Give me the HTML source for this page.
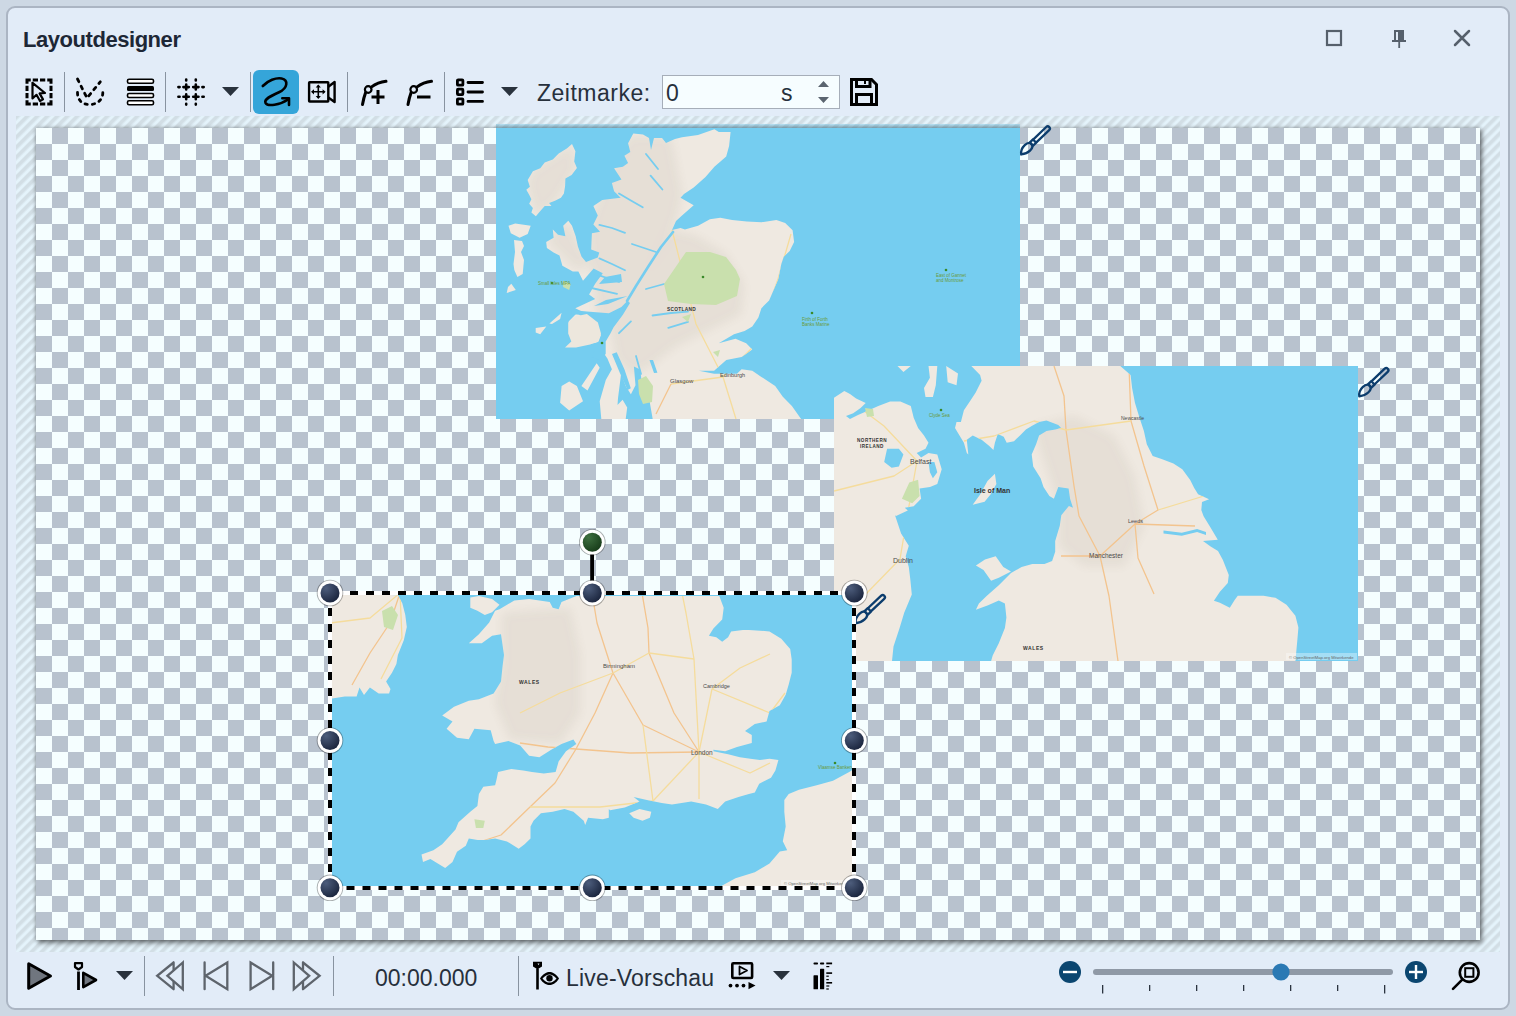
<!DOCTYPE html>
<html><head><meta charset="utf-8">
<style>
html,body{margin:0;padding:0;}
body{width:1516px;height:1016px;background:#cdd8e4;position:relative;overflow:hidden;font-family:"Liberation Sans",sans-serif;}
.abs{position:absolute;}
#win{position:absolute;left:6px;top:6px;width:1500px;height:1000px;border:2px solid #abb5c3;border-radius:9px;background:#e2ecf8;}
.title{position:absolute;left:23px;top:29px;font-size:22px;line-height:1;font-weight:bold;color:#1d2736;letter-spacing:-0.45px;white-space:nowrap;}
.sep{position:absolute;width:1px;background:#8893a0;}
.txt{position:absolute;font-size:23px;color:#27303c;white-space:nowrap;line-height:1;}
#hatch{position:absolute;left:16px;top:116px;width:1484px;height:836px;
 background:repeating-linear-gradient(135deg,#d2dee5 0px,#d2dee5 2px,#e4f3fb 4.2px,#e4f3fb 5.6px,#d2dee5 7.07px);}
#checker{position:absolute;left:36px;top:128px;width:1444px;height:812px;
 background:conic-gradient(#b8c2ce 0 25%,#f5feff 0 50%,#b8c2ce 0 75%,#f5feff 0) 0 0/32px 32px;
 box-shadow:0 0 4px rgba(0,0,0,0.35),2px 3px 5px rgba(0,0,0,0.45);}
body>svg{position:absolute;overflow:visible;}
</style></head><body>
<div id="win"></div>
<div class="title">Layoutdesigner</div>
<div id="hatch"></div>
<div id="checker"></div>
<svg width="1516" height="1016" style="left:0;top:0" viewBox="0 0 1516 1016">
<g transform="translate(496,124)"><svg x="0" y="0" width="524" height="295" style="position:static" viewBox="0 0 524 295"><rect width="524" height="295" fill="#75cdf0"/>
<clipPath id="cl1"><path d="M137.3,9.6 L147.0,10.5 L153.0,14.0 L155.0,26.0 L158.0,14.0 L166.0,14.0 L170.0,19.0 L179.0,15.0 L186.0,13.3 L202.0,11.1 L218.4,5.2 L222.8,8.1 L234.6,8.1 L233.1,22.1 L230.2,32.5 L218.4,42.8 L209.5,53.1 L197.7,63.5 L188.0,70.0 L184.5,73.8 L197.7,81.2 L186.0,91.5 L180.0,97.0 L176.0,106.0 L184.5,104.0 L188.9,105.5 L202.1,101.8 L213.9,95.2 L224.3,93.7 L236.1,95.9 L250.8,97.4 L265.6,98.2 L280.4,95.9 L289.2,98.9 L296.6,106.3 L298.1,118.1 L293.7,126.9 L287.7,132.8 L285.3,140.0 L282.2,155.3 L277.6,165.9 L273.1,176.6 L265.4,184.2 L262.4,193.4 L256.3,202.5 L248.6,207.1 L238.0,210.2 L222.7,219.3 L239.5,214.8 L250.2,219.3 L256.3,225.4 L245.6,233.1 L230.3,236.1 L218.1,246.8 L202.9,246.8 L218.1,249.8 L241.0,249.8 L245.6,245.3 L256.3,246.8 L265.4,252.9 L279.2,262.0 L286.8,272.7 L295.9,281.9 L305.1,295.0 L340.0,295.0 L144.9,295.0 L146.5,277.3 L141.9,259.0 L137.3,274.3 L129.7,262.0 L125.1,249.8 L122.0,274.3 L120.5,295.0 L105.3,295.0 L103.7,277.3 L109.8,255.9 L115.9,245.3 L111.4,234.6 L105.3,225.4 L106.8,216.3 L111.4,207.1 L106.8,198.0 L94.6,194.9 L88.5,188.8 L79.3,184.2 L99.2,175.1 L93.1,170.5 L99.2,159.8 L106.8,149.2 L97.6,144.6 L87.0,156.8 L82.4,147.6 L76.8,147.6 L66.4,141.7 L63.5,131.4 L57.6,128.4 L50.9,124.0 L50.2,118.1 L57.6,113.7 L56.8,105.5 L62.0,110.7 L69.4,112.2 L67.2,101.8 L72.3,96.7 L76.0,101.8 L79.7,112.2 L81.9,122.5 L85.6,132.8 L90.0,138.0 L101.8,133.6 L103.3,128.4 L95.2,125.5 L95.9,109.2 L104.1,107.7 L97.4,100.4 L101.8,91.5 L97.4,81.9 L106.3,76.0 L112.2,75.3 L124.7,73.8 L118.1,67.2 L115.9,59.0 L125.5,55.4 L118.1,44.3 L126.9,42.8 L132.1,39.1 L128.4,31.7 L134.3,28.0 L132.1,19.2 Z M76.0,19.9 L79.4,27.3 L78.2,37.6 L80.9,44.0 L75.6,50.9 L69.4,54.6 L69.1,62.0 L67.9,69.4 L64.9,73.8 L59.0,76.8 L53.1,79.0 L55.4,81.9 L48.7,81.9 L44.3,87.1 L39.9,92.3 L35.4,88.6 L36.9,84.1 L33.2,79.7 L35.4,75.3 L33.2,70.8 L30.3,65.7 L33.9,62.7 L31.7,56.1 L36.9,47.2 L44.3,44.3 L48.7,38.4 L56.8,35.4 L62.7,29.5 L70.8,24.4 Z M12.5,101.8 L19.2,99.6 L34.7,101.8 L31.7,110.0 L23.6,113.7 L14.8,109.2 Z M18.0,116.0 L26.0,117.0 L28.0,122.0 L25.0,128.0 L28.0,136.0 L26.7,149.9 L21.4,153.0 L18.3,146.1 L17.5,140.0 L19.0,128.0 Z M15.3,159.8 L19.8,165.9 L10.7,169.0 L12.0,163.0 Z M53.4,199.5 L65.6,188.8 L64.1,194.9 L56.0,200.0 Z M39.7,204.0 L50.3,202.5 L44.2,210.2 L39.7,208.6 Z M72.6,197.4 L80.0,190.0 L87.1,185.8 L101.6,191.6 L108.0,197.0 L116.1,203.3 L110.3,214.9 L99.0,219.0 L87.1,220.7 L78.4,209.1 Z M65.6,262.0 L73.2,257.5 L80.9,262.0 L87.0,277.3 L73.2,286.5 L64.1,278.8 Z M85.4,262.0 L100.7,239.2 L103.7,243.7 L91.5,266.6 Z M120.5,281.9 L126.6,275.8 L131.2,283.4 L129.7,295.0 L120.5,295.0 Z"/></clipPath>
<path fill="#efe9e1" d="M137.3,9.6 L147.0,10.5 L153.0,14.0 L155.0,26.0 L158.0,14.0 L166.0,14.0 L170.0,19.0 L179.0,15.0 L186.0,13.3 L202.0,11.1 L218.4,5.2 L222.8,8.1 L234.6,8.1 L233.1,22.1 L230.2,32.5 L218.4,42.8 L209.5,53.1 L197.7,63.5 L188.0,70.0 L184.5,73.8 L197.7,81.2 L186.0,91.5 L180.0,97.0 L176.0,106.0 L184.5,104.0 L188.9,105.5 L202.1,101.8 L213.9,95.2 L224.3,93.7 L236.1,95.9 L250.8,97.4 L265.6,98.2 L280.4,95.9 L289.2,98.9 L296.6,106.3 L298.1,118.1 L293.7,126.9 L287.7,132.8 L285.3,140.0 L282.2,155.3 L277.6,165.9 L273.1,176.6 L265.4,184.2 L262.4,193.4 L256.3,202.5 L248.6,207.1 L238.0,210.2 L222.7,219.3 L239.5,214.8 L250.2,219.3 L256.3,225.4 L245.6,233.1 L230.3,236.1 L218.1,246.8 L202.9,246.8 L218.1,249.8 L241.0,249.8 L245.6,245.3 L256.3,246.8 L265.4,252.9 L279.2,262.0 L286.8,272.7 L295.9,281.9 L305.1,295.0 L340.0,295.0 L144.9,295.0 L146.5,277.3 L141.9,259.0 L137.3,274.3 L129.7,262.0 L125.1,249.8 L122.0,274.3 L120.5,295.0 L105.3,295.0 L103.7,277.3 L109.8,255.9 L115.9,245.3 L111.4,234.6 L105.3,225.4 L106.8,216.3 L111.4,207.1 L106.8,198.0 L94.6,194.9 L88.5,188.8 L79.3,184.2 L99.2,175.1 L93.1,170.5 L99.2,159.8 L106.8,149.2 L97.6,144.6 L87.0,156.8 L82.4,147.6 L76.8,147.6 L66.4,141.7 L63.5,131.4 L57.6,128.4 L50.9,124.0 L50.2,118.1 L57.6,113.7 L56.8,105.5 L62.0,110.7 L69.4,112.2 L67.2,101.8 L72.3,96.7 L76.0,101.8 L79.7,112.2 L81.9,122.5 L85.6,132.8 L90.0,138.0 L101.8,133.6 L103.3,128.4 L95.2,125.5 L95.9,109.2 L104.1,107.7 L97.4,100.4 L101.8,91.5 L97.4,81.9 L106.3,76.0 L112.2,75.3 L124.7,73.8 L118.1,67.2 L115.9,59.0 L125.5,55.4 L118.1,44.3 L126.9,42.8 L132.1,39.1 L128.4,31.7 L134.3,28.0 L132.1,19.2 Z M76.0,19.9 L79.4,27.3 L78.2,37.6 L80.9,44.0 L75.6,50.9 L69.4,54.6 L69.1,62.0 L67.9,69.4 L64.9,73.8 L59.0,76.8 L53.1,79.0 L55.4,81.9 L48.7,81.9 L44.3,87.1 L39.9,92.3 L35.4,88.6 L36.9,84.1 L33.2,79.7 L35.4,75.3 L33.2,70.8 L30.3,65.7 L33.9,62.7 L31.7,56.1 L36.9,47.2 L44.3,44.3 L48.7,38.4 L56.8,35.4 L62.7,29.5 L70.8,24.4 Z M12.5,101.8 L19.2,99.6 L34.7,101.8 L31.7,110.0 L23.6,113.7 L14.8,109.2 Z M18.0,116.0 L26.0,117.0 L28.0,122.0 L25.0,128.0 L28.0,136.0 L26.7,149.9 L21.4,153.0 L18.3,146.1 L17.5,140.0 L19.0,128.0 Z M15.3,159.8 L19.8,165.9 L10.7,169.0 L12.0,163.0 Z M53.4,199.5 L65.6,188.8 L64.1,194.9 L56.0,200.0 Z M39.7,204.0 L50.3,202.5 L44.2,210.2 L39.7,208.6 Z M72.6,197.4 L80.0,190.0 L87.1,185.8 L101.6,191.6 L108.0,197.0 L116.1,203.3 L110.3,214.9 L99.0,219.0 L87.1,220.7 L78.4,209.1 Z M65.6,262.0 L73.2,257.5 L80.9,262.0 L87.0,277.3 L73.2,286.5 L64.1,278.8 Z M85.4,262.0 L100.7,239.2 L103.7,243.7 L91.5,266.6 Z M120.5,281.9 L126.6,275.8 L131.2,283.4 L129.7,295.0 L120.5,295.0 Z"/>
<filter id="bl1" x="-20%" y="-20%" width="140%" height="140%"><feGaussianBlur stdDeviation="5"/></filter>
<g clip-path="url(#cl1)"><path fill="#6e5f48" opacity="0.07" filter="url(#bl1)" d="M133.0,12.0 L160.0,12.0 L175.0,14.0 L186.0,70.0 L180.0,97.0 L150.0,150.0 L113.0,195.0 L104.0,210.0 L96.0,150.0 L92.0,110.0 L98.0,87.0 L115.0,45.0 Z M113.0,195.0 L150.0,150.0 L176.0,106.0 L200.0,112.0 L230.0,130.0 L248.0,160.0 L245.0,190.0 L215.0,205.0 L180.0,222.0 L150.0,245.0 L135.0,250.0 L120.0,235.0 Z M50.0,116.0 L72.0,97.0 L85.0,125.0 L100.0,139.0 L80.0,146.0 Z M36.0,47.0 L76.0,20.0 L80.0,44.0 L60.0,77.0 L40.0,92.0 L31.0,60.0 Z"/></g>
<g clip-path="url(#cl1)" fill="none" stroke-width="1.3" stroke-linejoin="round"><path stroke="#f5dc9c" d="M175,260 L227,253 L260,220 L282,155 L295,110"/><path stroke="#f3c48e" d="M175,260 L160,290"/><path stroke="#f5dc9c" d="M227,253 L240,295"/><path stroke="#f5dc9c" d="M227,253 L200,200 L176,106"/></g>
<path fill="#75cdf0" d="M75.3,186.1 L90.9,187.6 L112.9,189.2 L125.4,183.0 L131.6,176.7 L134.0,179.0 L126.9,190.8 L117.6,203.3 L114.4,209.6 L109.7,217.4 L109.7,229.9 L103.5,236.2 L95.6,233.0 L100.3,223.6 L105.0,211.1 L101.9,206.4 L90.9,195.5 L83.1,190.8 L75.3,190.0 Z M116.0,229.9 L120.7,228.3 L128.5,245.5 L134.8,264.3 L131.6,265.9 L123.8,248.7 Z M137.9,242.4 L144.2,245.5 L145.7,258.1 L153.5,276.8 L156.7,295.0 L134.8,295.0 L131.6,276.8 L139.5,261.2 Z M153.5,236.0 L157.0,236.0 L161.4,248.7 L158.0,249.0 Z M125.0,150.0 L109.0,153.0 L103.0,160.0 L126.0,158.0 Z M131.6,172.0 L110.0,176.0 L98.0,182.0 L112.0,180.0 Z"/>
<path fill="#ede7dd" d="M72.2,198.6 L80.0,192.3 L90.9,190.0 L101.9,198.6 L105.0,209.6 L101.9,217.4 L94.1,220.5 L80.0,223.6 L69.0,223.6 L75.3,217.4 L72.2,209.6 Z"/>
<path fill="none" stroke="#75cdf0" stroke-width="2.6" stroke-linecap="round" stroke-linejoin="round" d="M177,108 L165,123 L152,143 L140,162 L131,177"/>
<path fill="none" stroke="#75cdf0" stroke-width="1.8" stroke-linecap="round" stroke-linejoin="round" d="M123,69.5 L134,76 L146.7,83.2 M154.6,51.7 L166.4,65.5 M103.4,100.9 L116,104 L129,108.8 M103.4,134.4 L116,140 L129,146.2 M99.4,150.2 L123,158 M95.5,164 L121,169.9 M156.5,191.5 L175,189 L192,187.6 M172.3,203.8 L192,197.9 M123,209.2 L134.9,197.4 M140,232 L145,250 M150,30 L162,45 M136,120 L160,128 M150,165 L168,160"/>
<path fill="#c9e0ad" d="M168.0,160.0 L190.0,128.0 L214.0,128.0 L230.0,133.0 L240.0,146.0 L244.0,155.0 L241.0,172.0 L220.0,181.0 L195.0,180.0 L172.0,177.0 Z M142.0,256.0 L150.0,252.0 L157.0,262.0 L156.0,278.0 L147.0,280.0 L143.0,270.0 Z M186.0,193.0 L195.0,190.0 L192.0,198.0 Z M217.0,228.0 L224.0,226.0 L222.0,233.0 Z M67.1,156.8 L74.8,159.8 L73.2,165.9 L67.1,162.9 Z"/>
</svg></g>
<g transform="translate(834,366)"><svg x="0" y="0" width="524" height="295" style="position:static" viewBox="0 0 524 295"><rect width="524" height="295" fill="#75cdf0"/>
<clipPath id="cl2"><path d="M0.0,31.7 L10.3,25.1 L16.0,28.0 L22.1,32.5 L31.7,36.9 L26.6,42.0 L19.2,47.2 L12.0,50.0 L16.0,53.0 L24.0,49.0 L32.0,45.5 L44.3,39.9 L56.1,35.4 L66.4,35.4 L76.8,39.9 L79.7,51.7 L84.1,62.0 L90.0,69.4 L94.5,76.8 L91.5,82.7 L82.7,87.1 L87.1,91.5 L94.5,87.1 L103.3,88.6 L107.7,103.3 L103.3,118.1 L96.0,121.0 L85.6,122.5 L87.1,132.8 L79.7,140.2 L70.8,141.7 L73.8,144.6 L62.0,150.0 L61.0,149.2 L67.1,167.5 L74.8,179.7 L71.7,190.3 L74.8,201.0 L76.3,213.2 L77.8,228.5 L70.2,246.8 L65.6,262.0 L59.5,280.4 L58.0,295.0 L0.0,295.0 Z M63.5,0.0 L76.8,0.0 L69.4,5.9 Z M94.5,0.0 L103.3,0.0 L101.8,19.2 L98.9,31.0 L91.5,31.0 L90.0,22.1 L95.9,11.8 Z M112.2,0.0 L124.0,7.4 L122.5,19.2 L113.7,16.2 Z M138.7,138.7 L146.1,128.4 L153.5,115.1 L160.9,107.7 L162.4,118.1 L156.5,128.4 L150.6,135.8 L141.7,138.0 Z M137.3,0.0 L146.1,8.9 L147.6,14.8 L141.7,26.6 L135.8,35.4 L129.9,44.3 L126.9,56.1 L122.5,56.1 L121.0,62.0 L125.5,69.4 L129.9,76.8 L132.8,87.1 L134.3,88.6 L132.8,73.8 L138.7,69.4 L147.6,73.8 L155.0,79.7 L159.4,84.1 L160.9,76.8 L163.8,67.9 L169.7,70.8 L172.7,76.8 L180.0,75.3 L186.0,69.4 L191.9,63.5 L197.7,60.0 L205.0,56.0 L212.5,54.6 L224.3,59.0 L227.2,62.0 L221.3,63.5 L212.5,64.9 L205.1,69.4 L202.1,78.2 L197.7,88.6 L199.2,100.4 L206.6,112.2 L209.5,121.0 L215.4,129.9 L219.9,132.8 L224.3,121.0 L234.6,122.5 L236.1,132.8 L239.0,141.7 L234.9,140.0 L227.3,149.2 L225.8,159.8 L221.2,175.1 L221.2,185.8 L218.1,194.9 L210.5,198.0 L198.3,198.0 L187.6,201.0 L177.0,207.1 L164.8,219.3 L152.6,230.0 L144.9,237.6 L141.9,243.7 L154.1,239.2 L164.8,234.6 L170.9,237.6 L172.4,251.4 L170.9,262.0 L164.8,277.3 L158.7,289.5 L157.1,295.0 L461.4,295.0 L463.4,273.5 L464.4,261.6 L461.4,249.7 L452.5,238.7 L441.5,231.8 L429.6,229.8 L415.7,229.8 L403.8,229.8 L400.8,233.8 L395.8,241.7 L385.9,236.7 L379.9,234.8 L385.9,225.8 L393.8,216.9 L394.8,208.9 L388.9,194.0 L384.0,185.0 L376.6,180.6 L369.0,174.9 L383.8,173.8 L375.9,160.5 L369.6,150.2 L367.3,143.9 L368.0,136.0 L375.1,133.3 L364.1,128.2 L360.2,121.9 L356.2,114.0 L348.3,103.3 L339.4,97.4 L327.6,93.0 L318.7,90.0 L312.8,78.2 L309.9,64.9 L305.5,51.7 L301.0,36.9 L298.1,22.1 L296.6,8.9 L286.3,0.0 Z M141.9,199.5 L151.0,193.4 L161.7,190.3 L169.3,201.0 L177.0,205.6 L164.8,211.7 L157.1,214.8 L149.5,204.1 Z"/></clipPath>
<path fill="#efe9e1" d="M0.0,31.7 L10.3,25.1 L16.0,28.0 L22.1,32.5 L31.7,36.9 L26.6,42.0 L19.2,47.2 L12.0,50.0 L16.0,53.0 L24.0,49.0 L32.0,45.5 L44.3,39.9 L56.1,35.4 L66.4,35.4 L76.8,39.9 L79.7,51.7 L84.1,62.0 L90.0,69.4 L94.5,76.8 L91.5,82.7 L82.7,87.1 L87.1,91.5 L94.5,87.1 L103.3,88.6 L107.7,103.3 L103.3,118.1 L96.0,121.0 L85.6,122.5 L87.1,132.8 L79.7,140.2 L70.8,141.7 L73.8,144.6 L62.0,150.0 L61.0,149.2 L67.1,167.5 L74.8,179.7 L71.7,190.3 L74.8,201.0 L76.3,213.2 L77.8,228.5 L70.2,246.8 L65.6,262.0 L59.5,280.4 L58.0,295.0 L0.0,295.0 Z M63.5,0.0 L76.8,0.0 L69.4,5.9 Z M94.5,0.0 L103.3,0.0 L101.8,19.2 L98.9,31.0 L91.5,31.0 L90.0,22.1 L95.9,11.8 Z M112.2,0.0 L124.0,7.4 L122.5,19.2 L113.7,16.2 Z M138.7,138.7 L146.1,128.4 L153.5,115.1 L160.9,107.7 L162.4,118.1 L156.5,128.4 L150.6,135.8 L141.7,138.0 Z M137.3,0.0 L146.1,8.9 L147.6,14.8 L141.7,26.6 L135.8,35.4 L129.9,44.3 L126.9,56.1 L122.5,56.1 L121.0,62.0 L125.5,69.4 L129.9,76.8 L132.8,87.1 L134.3,88.6 L132.8,73.8 L138.7,69.4 L147.6,73.8 L155.0,79.7 L159.4,84.1 L160.9,76.8 L163.8,67.9 L169.7,70.8 L172.7,76.8 L180.0,75.3 L186.0,69.4 L191.9,63.5 L197.7,60.0 L205.0,56.0 L212.5,54.6 L224.3,59.0 L227.2,62.0 L221.3,63.5 L212.5,64.9 L205.1,69.4 L202.1,78.2 L197.7,88.6 L199.2,100.4 L206.6,112.2 L209.5,121.0 L215.4,129.9 L219.9,132.8 L224.3,121.0 L234.6,122.5 L236.1,132.8 L239.0,141.7 L234.9,140.0 L227.3,149.2 L225.8,159.8 L221.2,175.1 L221.2,185.8 L218.1,194.9 L210.5,198.0 L198.3,198.0 L187.6,201.0 L177.0,207.1 L164.8,219.3 L152.6,230.0 L144.9,237.6 L141.9,243.7 L154.1,239.2 L164.8,234.6 L170.9,237.6 L172.4,251.4 L170.9,262.0 L164.8,277.3 L158.7,289.5 L157.1,295.0 L461.4,295.0 L463.4,273.5 L464.4,261.6 L461.4,249.7 L452.5,238.7 L441.5,231.8 L429.6,229.8 L415.7,229.8 L403.8,229.8 L400.8,233.8 L395.8,241.7 L385.9,236.7 L379.9,234.8 L385.9,225.8 L393.8,216.9 L394.8,208.9 L388.9,194.0 L384.0,185.0 L376.6,180.6 L369.0,174.9 L383.8,173.8 L375.9,160.5 L369.6,150.2 L367.3,143.9 L368.0,136.0 L375.1,133.3 L364.1,128.2 L360.2,121.9 L356.2,114.0 L348.3,103.3 L339.4,97.4 L327.6,93.0 L318.7,90.0 L312.8,78.2 L309.9,64.9 L305.5,51.7 L301.0,36.9 L298.1,22.1 L296.6,8.9 L286.3,0.0 Z M141.9,199.5 L151.0,193.4 L161.7,190.3 L169.3,201.0 L177.0,205.6 L164.8,211.7 L157.1,214.8 L149.5,204.1 Z"/>
<filter id="bl2" x="-20%" y="-20%" width="140%" height="140%"><feGaussianBlur stdDeviation="5"/></filter>
<g clip-path="url(#cl2)"><path fill="#6e5f48" opacity="0.07" filter="url(#bl2)" d="M200.0,60.0 L240.0,50.0 L280.0,70.0 L300.0,110.0 L310.0,160.0 L290.0,200.0 L250.0,200.0 L225.0,180.0 L225.0,140.0 L215.0,110.0 L205.0,80.0 Z"/></g>
<g clip-path="url(#cl2)" fill="none" stroke-width="1.3" stroke-linejoin="round"><path stroke="#f3c48e" d="M284,295 L275,230 L266,190 L245,150 L240,120 L232,64 L230,30 L220,0"/><path stroke="#f3c48e" d="M227,190 L266,190 L301,158 L361,160"/><path stroke="#f3c48e" d="M320,228 L304,192 L301,158 L324,144 L310,100 L297,55 L295,0"/><path stroke="#f5dc9c" d="M66,193 L75,140 L83,95"/><path stroke="#f5dc9c" d="M83,95 L60,110 L20,120 L0,125"/><path stroke="#f5dc9c" d="M232,64 L297,55"/><path stroke="#f5dc9c" d="M83,95 L50,60 L30,45"/><path stroke="#f5dc9c" d="M66,193 L30,230 L0,260"/><path stroke="#f5dc9c" d="M232,64 L200,55 L160,70 L130,75"/><path stroke="#f5dc9c" d="M324,144 L370,130"/></g>
<path fill="#75cdf0" d="M50.2,95.9 L53.1,82.7 L64.9,82.7 L69.4,88.6 L64.9,100.4 L57.6,101.8 Z M94.5,95.9 L100.4,95.9 L103.3,106.3 L98.9,112.2 L95.9,106.3 Z M329.5,164.4 L347.8,166.7 L363.1,162.9 L372.0,166.0 L372.0,169.0 L363.1,165.9 L347.8,169.7 L329.5,167.5 Z"/>
<path fill="#c9e0ad" d="M75.3,116.6 L84.1,113.7 L85.6,129.9 L78.2,137.3 L67.9,132.8 Z M31.0,42.0 L39.0,43.0 L40.0,50.0 L33.0,51.0 Z"/>
</svg></g>
<g transform="translate(330,593)"><svg x="0" y="0" width="524" height="295" style="position:static" viewBox="0 0 524 295"><rect width="524" height="295" fill="#75cdf0"/>
<clipPath id="cl3"><path d="M0.0,0.0 L67.9,2.2 L72.3,10.3 L75.3,22.1 L76.8,34.0 L73.8,47.2 L67.9,62.0 L66.4,70.9 L62.0,79.7 L56.1,88.6 L60.5,96.0 L59.1,100.4 L48.7,100.4 L39.9,94.5 L34.0,101.9 L29.5,94.5 L26.6,103.4 L14.8,103.4 L2.2,105.6 L0.0,105.6 Z M140.3,4.4 L148.9,3.0 L162.1,5.9 L169.5,11.8 L162.1,19.2 L154.8,22.1 L147.4,17.7 L140.3,14.8 Z M169.5,16.2 L184.3,7.4 L199.1,5.9 L219.7,8.9 L222.7,14.8 L228.6,16.2 L231.5,8.9 L246.3,3.0 L389.3,3.0 L393.7,14.8 L392.2,26.6 L383.4,35.4 L378.9,42.8 L386.3,44.3 L392.2,48.7 L398.1,44.3 L401.1,38.4 L412.9,36.9 L418.9,36.9 L439.5,38.4 L451.3,45.7 L460.2,56.1 L461.7,66.4 L461.7,79.7 L458.7,91.5 L455.7,101.8 L449.8,112.2 L439.5,118.1 L436.6,128.4 L424.8,131.0 L415.0,138.0 L421.8,142.0 L421.8,150.0 L407.0,153.9 L395.2,158.3 L383.4,156.8 L383.4,158.3 L398.1,161.2 L409.9,164.2 L420.3,165.7 L430.0,167.1 L439.5,165.7 L448.4,167.1 L445.4,177.5 L441.0,184.8 L429.2,190.7 L424.8,199.6 L418.9,201.1 L408.5,204.1 L395.2,208.5 L387.8,215.9 L376.0,211.4 L361.2,208.5 L342.0,211.4 L331.7,210.0 L316.9,207.0 L303.6,204.1 L309.5,208.5 L294.8,214.4 L280.0,217.3 L278.8,215.9 L278.8,224.7 L272.9,226.2 L258.1,224.7 L255.2,232.1 L253.7,227.7 L243.4,218.8 L234.5,215.9 L222.7,218.8 L210.9,220.3 L203.5,227.7 L200.5,233.6 L200.5,245.4 L194.6,251.3 L188.7,255.7 L176.9,248.4 L165.1,245.4 L154.8,246.9 L147.6,246.9 L138.8,245.4 L135.8,252.8 L127.0,258.7 L122.5,269.0 L115.2,274.9 L100.4,266.1 L93.0,269.0 L91.5,261.6 L103.4,257.2 L112.2,251.3 L125.5,236.5 L128.5,229.2 L140.3,218.8 L147.4,212.9 L148.9,201.1 L153.3,193.7 L165.1,192.2 L166.6,186.3 L168.1,179.0 L181.3,176.0 L193.2,177.5 L202.0,179.0 L213.8,180.4 L225.6,179.0 L228.6,168.6 L236.0,158.3 L246.3,150.9 L243.4,146.5 L231.5,150.9 L221.2,156.8 L209.4,164.2 L199.1,162.7 L190.2,152.4 L178.4,148.0 L165.1,150.9 L163.6,148.0 L160.7,137.3 L144.4,135.8 L138.8,146.2 L127.0,144.7 L116.6,135.8 L122.5,128.5 L112.2,122.5 L124.0,113.7 L138.8,107.8 L148.9,106.3 L163.6,100.4 L171.0,88.6 L172.5,73.8 L174.0,62.0 L172.5,51.7 L171.0,41.3 L162.1,42.8 L151.8,50.2 L138.8,50.2 L148.9,41.3 L159.2,29.5 L165.1,17.7 Z M299.2,220.3 L309.5,215.9 L321.3,218.8 L319.9,224.7 L312.5,227.7 L303.6,224.7 Z M524.0,176.0 L519.2,178.9 L503.0,187.8 L486.7,192.2 L469.0,196.7 L458.7,201.1 L454.3,207.0 L454.3,218.8 L455.7,233.5 L452.8,248.3 L457.2,257.2 L449.8,258.6 L439.5,270.4 L424.8,279.3 L405.5,285.3 L392.2,292.6 L390.0,295.0 L524.0,295.0 Z"/></clipPath>
<path fill="#efe9e1" d="M0.0,0.0 L67.9,2.2 L72.3,10.3 L75.3,22.1 L76.8,34.0 L73.8,47.2 L67.9,62.0 L66.4,70.9 L62.0,79.7 L56.1,88.6 L60.5,96.0 L59.1,100.4 L48.7,100.4 L39.9,94.5 L34.0,101.9 L29.5,94.5 L26.6,103.4 L14.8,103.4 L2.2,105.6 L0.0,105.6 Z M140.3,4.4 L148.9,3.0 L162.1,5.9 L169.5,11.8 L162.1,19.2 L154.8,22.1 L147.4,17.7 L140.3,14.8 Z M169.5,16.2 L184.3,7.4 L199.1,5.9 L219.7,8.9 L222.7,14.8 L228.6,16.2 L231.5,8.9 L246.3,3.0 L389.3,3.0 L393.7,14.8 L392.2,26.6 L383.4,35.4 L378.9,42.8 L386.3,44.3 L392.2,48.7 L398.1,44.3 L401.1,38.4 L412.9,36.9 L418.9,36.9 L439.5,38.4 L451.3,45.7 L460.2,56.1 L461.7,66.4 L461.7,79.7 L458.7,91.5 L455.7,101.8 L449.8,112.2 L439.5,118.1 L436.6,128.4 L424.8,131.0 L415.0,138.0 L421.8,142.0 L421.8,150.0 L407.0,153.9 L395.2,158.3 L383.4,156.8 L383.4,158.3 L398.1,161.2 L409.9,164.2 L420.3,165.7 L430.0,167.1 L439.5,165.7 L448.4,167.1 L445.4,177.5 L441.0,184.8 L429.2,190.7 L424.8,199.6 L418.9,201.1 L408.5,204.1 L395.2,208.5 L387.8,215.9 L376.0,211.4 L361.2,208.5 L342.0,211.4 L331.7,210.0 L316.9,207.0 L303.6,204.1 L309.5,208.5 L294.8,214.4 L280.0,217.3 L278.8,215.9 L278.8,224.7 L272.9,226.2 L258.1,224.7 L255.2,232.1 L253.7,227.7 L243.4,218.8 L234.5,215.9 L222.7,218.8 L210.9,220.3 L203.5,227.7 L200.5,233.6 L200.5,245.4 L194.6,251.3 L188.7,255.7 L176.9,248.4 L165.1,245.4 L154.8,246.9 L147.6,246.9 L138.8,245.4 L135.8,252.8 L127.0,258.7 L122.5,269.0 L115.2,274.9 L100.4,266.1 L93.0,269.0 L91.5,261.6 L103.4,257.2 L112.2,251.3 L125.5,236.5 L128.5,229.2 L140.3,218.8 L147.4,212.9 L148.9,201.1 L153.3,193.7 L165.1,192.2 L166.6,186.3 L168.1,179.0 L181.3,176.0 L193.2,177.5 L202.0,179.0 L213.8,180.4 L225.6,179.0 L228.6,168.6 L236.0,158.3 L246.3,150.9 L243.4,146.5 L231.5,150.9 L221.2,156.8 L209.4,164.2 L199.1,162.7 L190.2,152.4 L178.4,148.0 L165.1,150.9 L163.6,148.0 L160.7,137.3 L144.4,135.8 L138.8,146.2 L127.0,144.7 L116.6,135.8 L122.5,128.5 L112.2,122.5 L124.0,113.7 L138.8,107.8 L148.9,106.3 L163.6,100.4 L171.0,88.6 L172.5,73.8 L174.0,62.0 L172.5,51.7 L171.0,41.3 L162.1,42.8 L151.8,50.2 L138.8,50.2 L148.9,41.3 L159.2,29.5 L165.1,17.7 Z M299.2,220.3 L309.5,215.9 L321.3,218.8 L319.9,224.7 L312.5,227.7 L303.6,224.7 Z M524.0,176.0 L519.2,178.9 L503.0,187.8 L486.7,192.2 L469.0,196.7 L458.7,201.1 L454.3,207.0 L454.3,218.8 L455.7,233.5 L452.8,248.3 L457.2,257.2 L449.8,258.6 L439.5,270.4 L424.8,279.3 L405.5,285.3 L392.2,292.6 L390.0,295.0 L524.0,295.0 Z"/>
<filter id="bl3" x="-20%" y="-20%" width="140%" height="140%"><feGaussianBlur stdDeviation="5"/></filter>
<g clip-path="url(#cl3)"><path fill="#6e5f48" opacity="0.07" filter="url(#bl3)" d="M172.0,20.0 L240.0,15.0 L250.0,60.0 L250.0,120.0 L230.0,150.0 L180.0,146.0 L165.0,110.0 L172.0,70.0 Z"/></g>
<g clip-path="url(#cl3)" fill="none" stroke-width="1.3" stroke-linejoin="round"><path stroke="#f3c48e" d="M70,0 L60,30 L40,60 L22,92"/><path stroke="#f5dc9c" d="M70,0 L72,45 L51,86"/><path stroke="#f5dc9c" d="M0,30 L40,25 L70,0"/><path stroke="#f3c48e" d="M369,159 L344,120 L319,60 L318,35 L312,0"/><path stroke="#f3c48e" d="M283,80 L267,30 L262,0"/><path stroke="#f3c48e" d="M369,159 L313,132 L283,80"/><path stroke="#f3c48e" d="M369,159 L300,160 L246,156 L218,154 L190,150"/><path stroke="#f3c48e" d="M283,80 L265,120 L246,156 L225,190 L200,214 L171,242 L140,252"/><path stroke="#f5dc9c" d="M369,159 L364,66 L356,20 L352,0"/><path stroke="#f5dc9c" d="M369,159 L323,208"/><path stroke="#f5dc9c" d="M369,159 L382,96 L410,75 L440,61"/><path stroke="#f5dc9c" d="M369,159 L369,206"/><path stroke="#f5dc9c" d="M369,159 L420,180 L440,170"/><path stroke="#f5dc9c" d="M323,208 L270,214 L200,214"/><path stroke="#f5dc9c" d="M364,66 L319,60 L283,80 L230,100 L190,120"/><path stroke="#f5dc9c" d="M382,96 L440,120 L455,100"/><path stroke="#f5dc9c" d="M313,132 L323,208"/></g>
<path fill="#c9e0ad" d="M144.4,226.2 L154.8,227.7 L153.3,235.1 L145.9,235.1 Z M52.0,18.0 L62.0,13.0 L68.0,22.0 L63.0,37.0 L54.0,34.0 Z"/>
</svg></g>
</svg>
<svg width="1516" height="1016" style="left:0;top:0" viewBox="0 0 1516 1016">
<defs><radialGradient id="hb" cx="0.3" cy="0.25" r="0.85"><stop offset="0" stop-color="#4d5d7c"/><stop offset="1" stop-color="#18223a"/></radialGradient>
<radialGradient id="hg" cx="0.3" cy="0.25" r="0.85"><stop offset="0" stop-color="#3f7040"/><stop offset="1" stop-color="#163a18"/></radialGradient>
<pattern id="hatchp" width="10" height="10" patternUnits="userSpaceOnUse" patternTransform="translate(16,116)"><rect width="10" height="10" fill="#e4f2fa"/><path d="M-2.5,2.5 L2.5,-2.5 M0,10 L10,0 M7.5,12.5 L12.5,7.5" stroke="#d3dfe6" stroke-width="3.6"/></pattern></defs>
<linearGradient id="tsh" x1="0" y1="0" x2="0" y2="1"><stop offset="0" stop-color="#000" stop-opacity="0"/><stop offset="1" stop-color="#000" stop-opacity="0.3"/></linearGradient>
<rect x="496" y="124" width="524" height="4" fill="url(#hatchp)" opacity="0.6"/>
<rect x="496" y="124" width="524" height="4" fill="url(#tsh)"/>
<g transform="translate(1020.5,154.6) rotate(-43.72) scale(1.001)" fill="none" stroke="#0c3d6d" stroke-width="2.3" stroke-linejoin="round">
<path d="M19.5,-2.15 L37.6,-2.15 A2.15,2.15 0 0 1 37.6,2.15 L19.5,2.15"/>
<rect x="15.2" y="-2.3" width="4.3" height="4.6"/>
<path d="M0.6,0.4 C2,-1.6 5.5,-3.9 9.6,-3.9 C12.6,-3.9 15.2,-2.7 15.2,-0.2 C15.2,2.5 12.6,3.7 9.6,3.7 C6,3.7 3,2.1 0.6,0.4 Z"/>
</g>
<g transform="translate(1358.6,396.5) rotate(-43.53) scale(1.013)" fill="none" stroke="#0c3d6d" stroke-width="2.3" stroke-linejoin="round">
<path d="M19.5,-2.15 L37.6,-2.15 A2.15,2.15 0 0 1 37.6,2.15 L19.5,2.15"/>
<rect x="15.2" y="-2.3" width="4.3" height="4.6"/>
<path d="M0.6,0.4 C2,-1.6 5.5,-3.9 9.6,-3.9 C12.6,-3.9 15.2,-2.7 15.2,-0.2 C15.2,2.5 12.6,3.7 9.6,3.7 C6,3.7 3,2.1 0.6,0.4 Z"/>
</g>
<g transform="translate(855,623.4) rotate(-43.32) scale(1.013)" fill="none" stroke="#0c3d6d" stroke-width="2.3" stroke-linejoin="round">
<path d="M19.5,-2.15 L37.6,-2.15 A2.15,2.15 0 0 1 37.6,2.15 L19.5,2.15"/>
<rect x="15.2" y="-2.3" width="4.3" height="4.6"/>
<path d="M0.6,0.4 C2,-1.6 5.5,-3.9 9.6,-3.9 C12.6,-3.9 15.2,-2.7 15.2,-0.2 C15.2,2.5 12.6,3.7 9.6,3.7 C6,3.7 3,2.1 0.6,0.4 Z"/>
</g>
<rect x="1286" y="653" width="71" height="7" fill="#fff" opacity="0.35"/>
<text x="1289" y="658.5" font-family="Liberation Sans, sans-serif" font-size="4.2px" fill="#666">© OpenStreetMap.org Mitwirkende</text>
<rect x="781" y="880" width="71" height="6" fill="#fff" opacity="0.35"/>
<text x="784" y="885" font-family="Liberation Sans, sans-serif" font-size="4.2px" fill="#666">© OpenStreetMap.org Mitwirkende</text>
<g fill="#3a8a2a"><circle cx="812" cy="313" r="1.3"/><circle cx="946" cy="270" r="1.3"/><circle cx="552" cy="283" r="1.3"/><circle cx="602" cy="343" r="1.3"/><circle cx="703" cy="277" r="1.3"/><circle cx="941" cy="410" r="1.3"/><circle cx="835" cy="763" r="1.3"/></g>
<g font-family="Liberation Sans, sans-serif" fill="#6a9a3a" font-size="4.5px"><text x="802" y="321">Firth of Forth</text><text x="802" y="326">Banks Marine</text><text x="936" y="277">East of Gannet</text><text x="936" y="282">and Montrose</text><text x="538" y="285">Small Isles MPA</text><text x="929" y="417">Clyde Sea</text><text x="818" y="769">Vlaamse Banken</text></g>
<g font-family="Liberation Sans, sans-serif" fill="#4b4b4b" font-size="6.5px">
<text x="667" y="311" font-weight="bold" letter-spacing="0.3" font-size="4.8px" fill="#333">SCOTLAND</text>
<text x="974" y="493" font-weight="bold" font-size="7px" fill="#333">Isle of Man</text>
<text x="910" y="463.5" font-size="7px">Belfast</text>
<text x="857" y="442" font-weight="bold" font-size="4.6px" letter-spacing="0.5" fill="#333">NORTHERN</text>
<text x="860" y="448" font-weight="bold" font-size="4.6px" letter-spacing="0.5" fill="#333">IRELAND</text>
<text x="893" y="562.5" font-size="7px">Dublin</text>
<text x="1089" y="557.5" font-size="6.5px">Manchester</text>
<text x="519" y="684" font-weight="bold" font-size="5px" letter-spacing="0.6" fill="#333">WALES</text>
<text x="1023" y="650" font-weight="bold" font-size="5px" letter-spacing="0.6" fill="#333">WALES</text>
<text x="691" y="755" font-size="6.5px">London</text>
<text x="603" y="668" font-size="6px">Birmingham</text>
<text x="703" y="688" font-size="5.5px">Cambridge</text>
<text x="670" y="383" font-size="6px">Glasgow</text>
<text x="720" y="377" font-size="5.5px">Edinburgh</text>
<text x="1128" y="523" font-size="5.5px">Leeds</text>
<text x="1121" y="420" font-size="5px">Newcastle</text>
</g>
<g stroke-width="4" fill="none">
<path d="M330,593 H854" stroke="#fff"/><path d="M330,593 H854" stroke="#000" stroke-dasharray="8 8" stroke-dashoffset="12"/>
<path d="M330,888 H854" stroke="#fff"/><path d="M330,888 H854" stroke="#000" stroke-dasharray="8 8" stroke-dashoffset="15.5"/>
<path d="M330,593 V888" stroke="#fff"/><path d="M330,593 V888" stroke="#000" stroke-dasharray="8 8" stroke-dashoffset="1"/>
<path d="M854,593 V888" stroke="#fff"/><path d="M854,593 V888" stroke="#000" stroke-dasharray="8 8" stroke-dashoffset="1"/>
</g>
<rect x="590.2" y="554" width="3.8" height="27" fill="#000"/>
<circle cx="592.3" cy="542.2" r="13.3" fill="#000" opacity="0.32"/><circle cx="592.3" cy="542.2" r="12.4" fill="#fff"/><circle cx="592.3" cy="542.2" r="9.5" fill="url(#hg)"/>
<circle cx="330" cy="593" r="13.3" fill="#000" opacity="0.32"/><circle cx="330" cy="593" r="12.4" fill="#fff"/><circle cx="330" cy="593" r="9.5" fill="url(#hb)"/>
<circle cx="592.3" cy="593" r="13.3" fill="#000" opacity="0.32"/><circle cx="592.3" cy="593" r="12.4" fill="#fff"/><circle cx="592.3" cy="593" r="9.5" fill="url(#hb)"/>
<circle cx="854.3" cy="593" r="13.3" fill="#000" opacity="0.32"/><circle cx="854.3" cy="593" r="12.4" fill="#fff"/><circle cx="854.3" cy="593" r="9.5" fill="url(#hb)"/>
<circle cx="330" cy="740.5" r="13.3" fill="#000" opacity="0.32"/><circle cx="330" cy="740.5" r="12.4" fill="#fff"/><circle cx="330" cy="740.5" r="9.5" fill="url(#hb)"/>
<circle cx="854.3" cy="740.5" r="13.3" fill="#000" opacity="0.32"/><circle cx="854.3" cy="740.5" r="12.4" fill="#fff"/><circle cx="854.3" cy="740.5" r="9.5" fill="url(#hb)"/>
<circle cx="330" cy="887.8" r="13.3" fill="#000" opacity="0.32"/><circle cx="330" cy="887.8" r="12.4" fill="#fff"/><circle cx="330" cy="887.8" r="9.5" fill="url(#hb)"/>
<circle cx="592.3" cy="887.8" r="13.3" fill="#000" opacity="0.32"/><circle cx="592.3" cy="887.8" r="12.4" fill="#fff"/><circle cx="592.3" cy="887.8" r="9.5" fill="url(#hb)"/>
<circle cx="854.3" cy="887.8" r="13.3" fill="#000" opacity="0.32"/><circle cx="854.3" cy="887.8" r="12.4" fill="#fff"/><circle cx="854.3" cy="887.8" r="9.5" fill="url(#hb)"/>
</svg>
<svg width="1516" height="1016" style="left:0;top:0" viewBox="0 0 1516 1016">
<!-- window controls -->
<g stroke="#56606c" fill="none">
 <rect x="1327" y="31" width="14" height="14" stroke-width="2.2"/>
 <path d="M1455,31 L1469,45 M1469,31 L1455,45" stroke-width="2.5" stroke-linecap="round"/>
</g>
<g fill="#56606c">
 <rect x="1394" y="30" width="10" height="2"/><rect x="1394" y="30" width="2" height="11"/><rect x="1398" y="30" width="6" height="11"/>
 <rect x="1392" y="40" width="14" height="2"/><rect x="1398.3" y="42" width="1.8" height="6"/>
</g>
<!-- toolbar -->
<g fill="#8893a0">
 <rect x="64" y="72" width="1" height="40"/><rect x="165" y="72" width="1" height="40"/><rect x="250" y="72" width="1" height="40"/>
 <rect x="347" y="72" width="1" height="40"/><rect x="444" y="72" width="1" height="40"/>
</g>
<g fill="none" stroke="#000" stroke-width="3">
 <path d="M25.5,79.9 H52.5 M51,78.4 V105.6 M52.5,104.1 H25.5 M27,105.6 V78.4" stroke-dasharray="5.25 2" stroke-linecap="butt"/>
 <path d="M32.5,82.8 L32.5,98.5 L36.5,94.8 L40,101 L43,99.4 L39.6,93.4 L45,93 Z" stroke-width="2.2" stroke-linejoin="round" fill="#e2ecf8"/>
 <path d="M77.5,79 L87,98 L100.3,81.8" stroke-dasharray="3 5" stroke-linecap="round" stroke-width="2.8"/>
 <path d="M77.5,92.5 C77.5,100 82,104.5 89.5,104.5 C97,104.5 102.8,100 102.8,92.5" stroke-dasharray="2.4 4.9" stroke-linecap="round" stroke-width="2.8"/>
</g>
<g stroke="#000" fill="none">
 <rect x="127.5" y="79.2" width="26" height="4" rx="1.5" stroke-width="1.6" fill="#fff"/>
 <rect x="127" y="86" width="27" height="5" rx="1.5" fill="#000" stroke="none"/>
 <rect x="127.5" y="93.5" width="26" height="4" rx="1.5" stroke-width="1.6" fill="#fff"/>
 <rect x="127.5" y="100.8" width="26" height="4" rx="1.5" stroke-width="1.6" fill="#fff"/>
</g>
<g stroke="#000" stroke-width="2.6" fill="none" stroke-linecap="round">
 <path d="M186.2,79.6 V80.5 M186.2,84.5 V89.4 M186.2,94.4 V99.3 M186.2,103.7 V104.6 M195.8,79.6 V80.5 M195.8,84.5 V89.4 M195.8,94.4 V99.3 M195.8,103.7 V104.6"/>
 <path d="M178.4,87.1 H179.6 M183.4,87.1 H188.8 M193.2,87.1 H198.5 M202.4,87.1 H203.7 M178.4,96.7 H179.6 M183.4,96.7 H188.8 M193.2,96.7 H198.5 M202.4,96.7 H203.7"/>
</g>
<path d="M222,87 L239,87 L230.5,96 Z" fill="#29323d"/>
<rect x="253" y="70" width="46" height="44" rx="6" fill="#35a5d9"/>
<g fill="none" stroke="#000" stroke-width="2.6" stroke-linecap="round" stroke-linejoin="round">
 <path d="M262.8,86 C268,80.5 276,77.5 281.5,78.5 C288.5,80 288,88 279,92.2 C270,96.2 264,99 265.5,102.8 C267.5,106.8 280,105 288,99.5"/>
 <path d="M282.3,98.2 L289,98.2 L289,105"/>
</g>
<g fill="none" stroke="#000" stroke-width="2.4" stroke-linejoin="round">
 <rect x="309.1" y="82.2" width="19.2" height="19.3" rx="0.6"/>
 <path d="M328.3,86.8 L334.6,82 L334.6,102 L328.3,97.5"/>
</g>
<g fill="none" stroke="#000" stroke-width="1.6">
 <path d="M312,91.8 L324.5,91.8 M318.3,85.5 L318.3,98"/>
</g>
<g fill="#000">
 <path d="M311,91.8 L314,89.2 L314,94.4Z M325.6,91.8 L322.6,89.2 L322.6,94.4Z M318.3,84.6 L315.7,87.6 L320.9,87.6Z M318.3,99 L315.7,96 L320.9,96Z"/>
</g>
<g fill="none" stroke="#000" stroke-width="3" stroke-linecap="round">
 <path d="M362.5,104.5 C363.3,100 364.3,96 365.6,92.6"/>
 <path d="M371.2,87.1 C375.5,84 380,82 386,81.3"/>
 <circle cx="368.2" cy="89.5" r="3.3" stroke-width="2.2"/>
 <path d="M371.5,97 L384.5,97 M378,90 L378,104" stroke-linecap="butt"/>
 <path d="M408,104.5 C408.8,100 409.8,96 411.1,92.6"/>
 <path d="M416.7,87.1 C421,84 425.5,82 431.5,81.3"/>
 <circle cx="413.7" cy="89.5" r="3.3" stroke-width="2.2"/>
 <path d="M417,97 L430.5,97" stroke-linecap="butt"/>
</g>
<g fill="none" stroke="#000" stroke-width="2.8" stroke-linecap="round">
 <rect x="457.4" y="79.8" width="5.5" height="5.4" rx="0.8" stroke-linecap="butt"/>
 <rect x="457.4" y="89.2" width="5.5" height="5.4" rx="0.8"/>
 <rect x="457.4" y="98.8" width="5.5" height="5.4" rx="0.8"/>
 <path d="M468,82.5 L482.5,82.5 M468,92 L482.5,92 M468,101.4 L482.5,101.4"/>
</g>
<path d="M501,87 L518,87 L509.5,96 Z" fill="#29323d"/>
<rect x="662.5" y="75.5" width="177" height="33" fill="#f6fdff" stroke="#a6aeb9" stroke-width="1"/>
<path d="M818,87 L829,87 L823.5,81 Z M818,97 L829,97 L823.5,103 Z" fill="#5b6570"/>
<g fill="none" stroke="#000" stroke-width="3" stroke-linejoin="miter">
 <path d="M851.5,79.5 L871.5,79.5 L876.5,84.5 L876.5,104.5 L851.5,104.5 Z"/>
 <path d="M856.5,79.5 L856.5,86.5 L870,86.5 L870,79.5"/>
 <path d="M856.5,104.5 L856.5,94.5 L871.5,94.5 L871.5,104.5"/>
</g>
<rect x="864" y="81" width="2" height="3" fill="#000"/>

<!-- bottom toolbar -->
<g fill="#8893a0">
 <rect x="144" y="956" width="1" height="40"/><rect x="333" y="956" width="1" height="40"/><rect x="518" y="956" width="1" height="40"/>
</g>
<path d="M28.7,963.8 L50.5,976 L28.7,988.3 Z" fill="#70767f" stroke="#000" stroke-width="3" stroke-linejoin="round"/>
<g fill="none" stroke="#000" stroke-width="2.6">
 <path d="M75,963.2 L82,963.2 L82,967 L78.5,969.5 L75,967 Z" stroke-width="2.2" stroke-linejoin="round"/>
 <path d="M78.5,971.5 L78.5,990" stroke-width="2.8"/>
 <path d="M83.3,972.8 L96,980 L83.3,987.2 Z" fill="#70767f" stroke-linejoin="round"/>
</g>
<path d="M116,971 L133,971 L124.5,980 Z" fill="#29323d"/>
<g fill="none" stroke="#5e646c" stroke-width="2.3" stroke-linejoin="miter" stroke-linecap="round">
 <path d="M173.6,962.5 L157.2,975.8 L173.6,989.2 M173.6,962.5 L173.6,969.5 M173.6,982 L173.6,989.2"/>
 <path d="M182.8,962.5 L167.4,975.8 L182.8,989.2 Z"/>
 <path d="M204.6,962.5 L204.6,989.2 M227.3,962.5 L205.6,975.8 L227.3,989.2 Z"/>
 <path d="M273.2,962.5 L273.2,989.2 M250.6,962.5 L272.2,975.8 L250.6,989.2 Z"/>
 <path d="M303,962.5 L319.6,975.8 L303,989.2 M303,962.5 L303,969.5 M303,982 L303,989.2"/>
 <path d="M293.8,962.5 L309.2,975.8 L293.8,989.2 Z"/>
</g>
<g fill="#000">
 <path d="M533,961.8 L542,961.8 L542,966.5 L537.5,969.3 L533,966.5 Z"/>
 <rect x="536.2" y="968.5" width="2.6" height="21"/>
</g>
<path d="M537.5,963.6 L539.5,963.6 L538.5,965.3Z" fill="#e2ecf8"/>
<path d="M540,978.5 C543,973.5 547,972 549.5,972 C552,972 556,973.5 559,978.5 C556,983.5 552,985 549.5,985 C547,985 543,983.5 540,978.5 Z" fill="#000"/>
<path d="M542.5,978.5 C545,975.5 547.5,974.4 549.5,974.4 C551.5,974.4 554,975.5 556.5,978.5 C554,981.5 551.5,982.6 549.5,982.6 C547.5,982.6 545,981.5 542.5,978.5 Z" fill="#e2ecf8"/>
<circle cx="549.5" cy="978.3" r="3.2" fill="#000"/>
<g fill="none" stroke="#000" stroke-width="2.6">
 <rect x="732.3" y="963.2" width="19.8" height="14.8" rx="1"/>
 <path d="M739.5,966.5 L747,970.5 L739.5,974.5 Z" stroke-width="1.8" stroke-linejoin="round"/>
</g>
<g fill="#000">
 <circle cx="730.5" cy="985.6" r="1.9"/><circle cx="737" cy="985.6" r="1.9"/><circle cx="743.5" cy="985.6" r="1.9"/>
 <path d="M748.5,982 L755.5,985.6 L748.5,989.2 Z"/>
</g>
<path d="M773,971 L790,971 L781.5,980 Z" fill="#29323d"/>
<g fill="#000">
 <rect x="813.5" y="975.3" width="4.5" height="14" rx="0.6"/>
 <rect x="820" y="968.8" width="4.2" height="20.5" rx="0.6"/>
 <rect x="813.5" y="962.5" width="4.5" height="2" rx="0.8"/><rect x="820" y="962.5" width="4.2" height="2" rx="0.8"/>
 <rect x="826.3" y="962.5" width="5.8" height="1.8"/>
 <rect x="826.3" y="966" width="3" height="1.2"/><rect x="826.3" y="972.3" width="5.8" height="1.6"/><rect x="826.3" y="975.6" width="2.5" height="1.2"/>
 <rect x="826.3" y="979" width="2.5" height="1.2"/><rect x="826.3" y="982" width="5.8" height="1.6"/><rect x="826.3" y="985.4" width="3" height="1.2"/><rect x="826.3" y="988.4" width="2.5" height="1.2"/>
</g>
<!-- zoom -->
<circle cx="1070" cy="972" r="11" fill="#0b4670"/>
<rect x="1063" y="970.8" width="14" height="2.4" fill="#fff"/>
<rect x="1093" y="969" width="300" height="6" rx="3" fill="#8f99a6"/>
<circle cx="1281" cy="972" r="8.6" fill="#2a79b4"/>
<g fill="#2b3440">
 <rect x="1102" y="985" width="1.3" height="8.5"/><rect x="1149" y="985" width="1.3" height="6"/><rect x="1196" y="985" width="1.3" height="6"/>
 <rect x="1243" y="985" width="1.3" height="6"/><rect x="1290" y="985" width="1.3" height="6"/><rect x="1337" y="985" width="1.3" height="6"/><rect x="1384" y="985" width="1.3" height="8.5"/>
</g>
<circle cx="1416" cy="972" r="11" fill="#0b4670"/>
<rect x="1409" y="970.8" width="14" height="2.4" fill="#fff"/><rect x="1414.8" y="965" width="2.4" height="14" fill="#fff"/>
<g fill="none" stroke="#000" stroke-width="2.6">
 <circle cx="1469.2" cy="972.5" r="9.4"/>
 <rect x="1465.2" y="968.2" width="8.2" height="8.6" stroke-width="2"/>
 <path d="M1462.5,979.3 L1453,988.8" stroke-linecap="round"/>
</g>
</svg>
<div class="txt" style="left:537px;top:82px;letter-spacing:0.5px">Zeitmarke:</div>
<div class="txt" style="left:666px;top:82px">0</div>
<div class="txt" style="left:781px;top:82px">s</div>
<div class="txt" style="left:375px;top:967px">00:00.000</div>
<div class="txt" style="left:566px;top:967px;letter-spacing:0.2px">Live-Vorschau</div>


</body></html>
